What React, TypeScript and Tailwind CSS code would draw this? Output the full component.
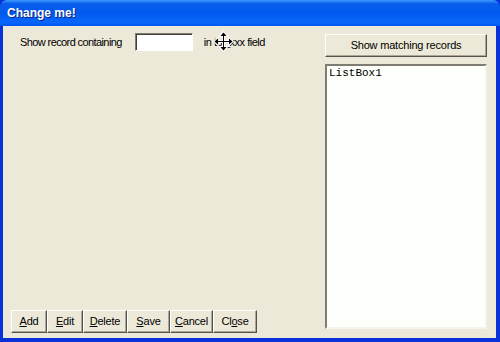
import React from "react";

const font = { fontFamily: '"Liberation Sans", Arial, sans-serif' };

function Btn({ label, u, w }: { label: string; u: number; w: string }) {
  return (
    <div
      className={`${w} h-[23px] flex items-center justify-center bg-[#ECE9D8] border border-t-white border-l-white border-r-[#55544c] border-b-[#55544c] shadow-[inset_-1px_-1px_0_#aca899] text-[11px] text-black whitespace-nowrap tracking-[-0.2px]`}
      style={font}
    >
      {u < 0 ? (
        <span>{label}</span>
      ) : (
        <span>
          {label.slice(0, u)}
          <span className="underline">{label.slice(u, u + 1)}</span>
          {label.slice(u + 1)}
        </span>
      )}
    </div>
  );
}

function MoveCursor() {
  return (
    <svg width="21" height="21" viewBox="0 0 21 21" className="absolute left-[210px] top-[5px]">
      <g stroke="white" strokeWidth="3" fill="none">
        <path d="M10.5 2 V19 M2 10.5 H19" />
      </g>
      <g fill="white" stroke="white" strokeWidth="1.5">
        <path d="M10.5 1 L7 5 H14 Z" />
        <path d="M10.5 20 L7 16 H14 Z" />
        <path d="M1 10.5 L5 7 V14 Z" />
        <path d="M20 10.5 L16 7 V14 Z" />
      </g>
      <g stroke="black" strokeWidth="1" fill="none">
        <path d="M10.5 3 V18 M3 10.5 H18" />
      </g>
      <g fill="black">
        <path d="M10.5 1.5 L7.5 5 H13.5 Z" />
        <path d="M10.5 19.5 L7.5 16 H13.5 Z" />
        <path d="M1.5 10.5 L5 7.5 V13.5 Z" />
        <path d="M19.5 10.5 L16 7.5 V13.5 Z" />
      </g>
    </svg>
  );
}

export default function App() {
  return (
    <div className="w-[500px] h-[342px] flex flex-col bg-[#0831D9] overflow-hidden" style={font}>
      <div className="h-[26px] shrink-0 rounded-t-[7px] bg-[linear-gradient(180deg,#3C9BFF_0%,#0A5EEB_14%,#0058EE_50%,#0A66FA_85%,#0058F0_100%)] flex items-center pl-[7px]">
        <span className="text-white font-bold text-[12px] [text-shadow:1px_1px_0_#0a1f80]" style={font}>
          Change me!
        </span>
      </div>
      <div className="flex-1 flex mx-[3px] mr-[4px] mb-[4px] bg-[#ECE9D8] relative">
        <div className="flex-1 flex flex-col justify-between pl-[8px] pb-[5px]">
          <div className="flex items-center pt-[7px] pl-[9px] text-[11px] text-black">
            <span className="tracking-[-0.6px]">Show record containing</span>
            <div className="ml-[13px] w-[58px] h-[18px] bg-white border border-t-[#7f7d72] border-l-[#7f7d72] border-r-white border-b-white shadow-[inset_1px_1px_0_#404040]" />
            <span className="ml-[11px] tracking-[-0.5px]">in tbl_xxx field</span>
          </div>
          <div className="flex">
            <Btn label="Add" u={0} w="w-[36px]" />
            <Btn label="Edit" u={0} w="w-[36px]" />
            <Btn label="Delete" u={0} w="w-[44px]" />
            <Btn label="Save" u={0} w="w-[43px]" />
            <Btn label="Cancel" u={0} w="w-[43px]" />
            <Btn label="Close" u={2} w="w-[44px]" />
          </div>
        </div>
        <div className="w-[162px] mr-[9px] flex flex-col pt-[8px] pb-[9px]">
          <Btn label="Show matching records" u={-1} w="w-full" />
          <div className="mt-[7px] flex-1 bg-[#FDFFFA] border-2 border-t-[#7f7d72] border-l-[#7f7d72] border-r-[#f4f3ee] border-b-[#f4f3ee] px-[2px] pt-[1px]">
            <div className="text-[11px] leading-[13px] text-black" style={{ fontFamily: '"Liberation Mono", "Courier New", monospace' }}>
              ListBox1
            </div>
          </div>
        </div>
        <MoveCursor />
      </div>
    </div>
  );
}
